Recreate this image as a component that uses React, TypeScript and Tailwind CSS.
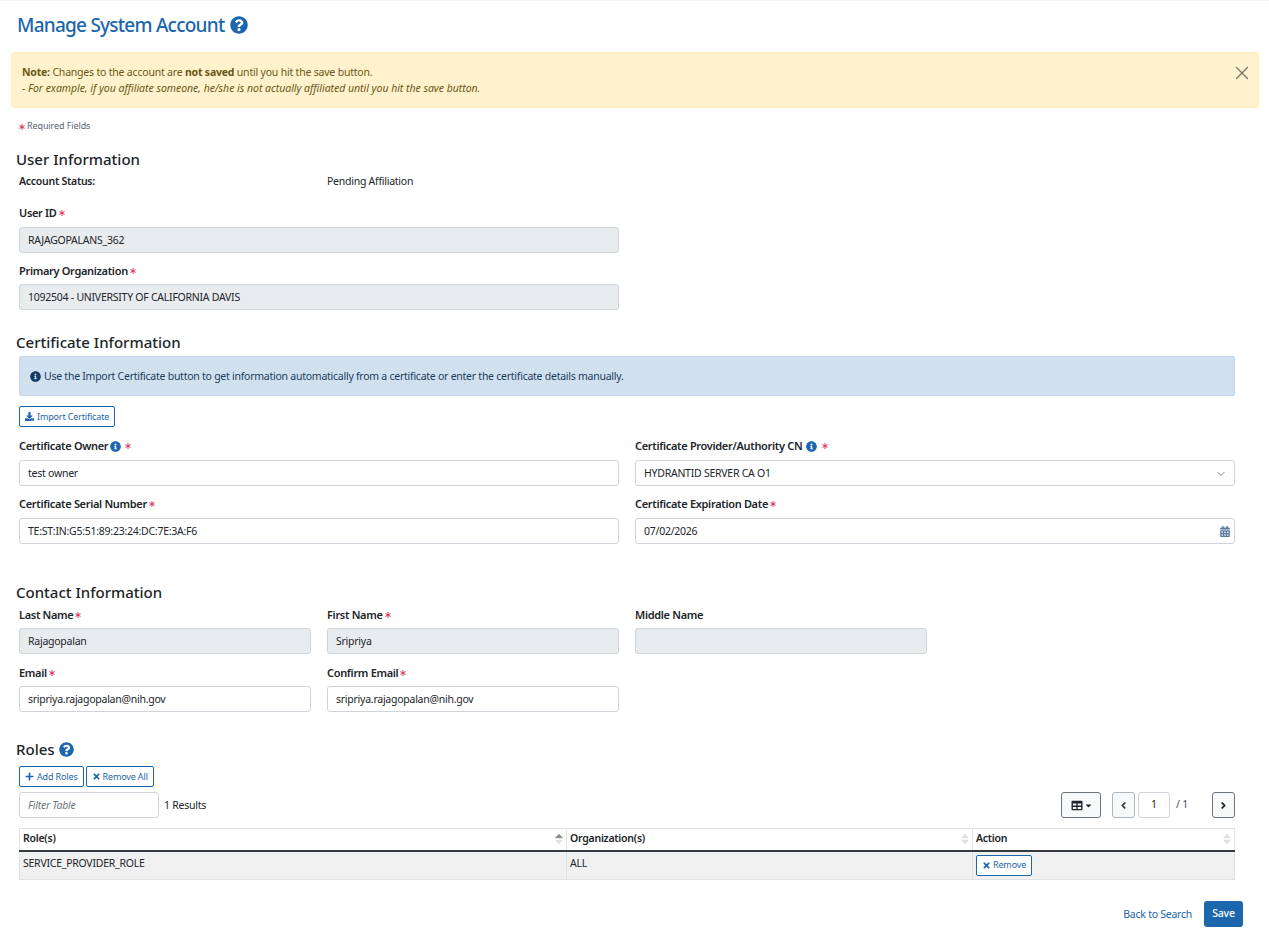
import React from 'react'
import {
  FaQuestionCircle,
  FaInfoCircle,
  FaDownload,
  FaPlus,
  FaTimes,
  FaTable,
  FaAsterisk,
  FaCalendarAlt,
  FaAngleLeft,
  FaAngleRight,
  FaCaretDown,
  FaSortUp,
  FaSortDown,
} from 'react-icons/fa'
import { LuChevronDown, LuX } from 'react-icons/lu'

function Req({ className = 'ml-[2px]' }: { className?: string }) {
  return <FaAsterisk className={`inline-block h-[6px] w-[6px] align-[-1px] text-[#dc3558] ${className}`} />
}

function Label({ children, className = 'pt-[1px]' }: { children: React.ReactNode; className?: string }) {
  return (
    <div className={`flex h-[17px] items-center text-[11px] font-semibold leading-[16px] tracking-[-0.32px] text-[#212529] ${className}`}>
      {children}
    </div>
  )
}

function Input({
  value,
  disabled,
  className = '',
  children,
}: {
  value: string
  disabled?: boolean
  className?: string
  children?: React.ReactNode
}) {
  return (
    <div
      className={`mt-[6px] flex h-[26px] items-center justify-between rounded-[3px] border border-[#ced4da] pl-[8px] pr-[4px] pt-[1px] text-[10.5px] text-[#212529] ${
        disabled ? 'bg-[#e9ecef]' : 'bg-white'
      } ${className}`}
    >
      {value}
      {children}
    </div>
  )
}

function OutlineButton({
  icon,
  label,
  className = 'gap-[3px]',
}: {
  icon: React.ReactNode
  label: string
  className?: string
}) {
  return (
    <button
      className={`flex h-[21px] items-center rounded-[2px] border border-[#1b66ac] bg-white px-[5px] text-[9px] tracking-[-0.15px] text-[#1b66ac] ${className}`}
    >
      {icon}
      {label}
    </button>
  )
}

function SortIcon({ active }: { active?: boolean }) {
  return (
    <span className="relative ml-auto h-[14px] w-[8px]">
      <FaSortUp className={`absolute left-0 top-0 h-[14px] w-[8px] ${active ? 'text-[#8a8f94]' : 'text-[#dee2e6]'}`} />
      <FaSortDown className="absolute left-0 top-0 h-[14px] w-[8px] text-[#dee2e6]" />
    </span>
  )
}

function Heading({ children }: { children: React.ReactNode }) {
  return <h2 className="pl-[16px] text-[15px] font-medium leading-[20px] tracking-normal text-[#212529]">{children}</h2>
}

export default function App() {
  return (
    <div className="h-[938px] overflow-hidden border-t border-[#f4f4f4] bg-white font-['Noto_Sans',sans-serif] tracking-[-0.25px] text-[#212529]">
      <h1 className="ml-[17px] mt-[11px] flex h-[26px] items-center gap-[6px] text-[19px] font-medium leading-[26px] tracking-[-0.76px] text-[#1b66ac]">
        Manage System Account
        <FaQuestionCircle className="h-[18px] w-[18px]" />
      </h1>

      <div className="ml-[11px] mr-[10px] mt-[14px] flex h-[56px] items-start justify-between rounded-[3px] border border-[#ffeeba] bg-[#fff2cd] pl-[10px] pr-[5px] pt-[11px] text-[10.5px] leading-[16px] text-[#6b5716]">
        <div>
          <div className="tracking-[-0.2px]">
            <b className="font-bold">Note:</b> Changes to the account are <b className="font-bold">not saved</b> until you hit the save button.
          </div>
          <div className="italic tracking-[-0.03px]">- For example, if you affiliate someone, he/she is not actually affiliated until you hit the save button.</div>
        </div>
        <LuX strokeWidth={1.5} className="mt-[-2px] h-[22px] w-[22px] text-[#7d7868]" />
      </div>

      <div className="ml-[19px] mt-[12px] flex h-[12px] items-center text-[9px] tracking-[-0.1px] text-[#5c6670]">
        <Req className="mr-[2px] mt-[2px]" />
        Required Fields
      </div>

      <div className="mt-[17px]">
        <Heading>User Information</Heading>
      </div>

      <div className="px-[19px]">
        <div className="mt-[4px] grid h-[17px] grid-cols-[292px_292px] items-center gap-x-[16px] text-[10.5px] leading-[17px]">
          <div className="font-semibold">Account Status:</div>
          <div>Pending Affiliation</div>
        </div>

        <div className="mt-[14px] w-[600px]">
          <Label>
            User ID <Req />
          </Label>
          <Input value="RAJAGOPALANS_362" disabled />
        </div>
        <div className="mt-[8px] w-[600px]">
          <Label className="pt-[2px]">
            Primary Organization <Req />
          </Label>
          <Input value="1092504 - UNIVERSITY OF CALIFORNIA DAVIS" disabled />
        </div>
      </div>

      <div className="mt-[22px]">
        <Heading>Certificate Information</Heading>
      </div>

      <div className="px-[19px]">
        <div className="mt-[4px] flex h-[40px] w-[1216px] items-center gap-[3px] rounded-[2px] border border-[#c3d6e8] bg-[#d1e0ef] pl-[10px] pt-[1px] text-[10.5px] text-[#1d3c5c]">
          <FaInfoCircle className="h-[11px] w-[11px] text-[#123a63]" />
          Use the Import Certificate button to get information automatically from a certificate or enter the certificate details manually.
        </div>

        <OutlineButton
          className="mt-[10px] gap-[3px]"
          icon={<FaDownload className="h-[9px] w-[9px]" />}
          label="Import Certificate"
        />

        <div className="mt-[10px] grid w-[1216px] grid-cols-2 gap-x-[16px] gap-y-[9px]">
          <div>
            <Label>
              Certificate Owner
              <FaInfoCircle className="ml-[2px] h-[11px] w-[11px] text-[#1b66ac]" />
              <Req className="ml-[4px]" />
            </Label>
            <Input value="test owner" />
          </div>
          <div>
            <Label>
              Certificate Provider/Authority CN
              <FaInfoCircle className="ml-[4px] h-[11px] w-[11px] text-[#1b66ac]" />
              <Req className="ml-[5px]" />
            </Label>
            <Input value="HYDRANTID SERVER CA O1">
              <LuChevronDown strokeWidth={1.5} className="mr-[3px] h-[12px] w-[12px] text-[#495057]" />
            </Input>
          </div>
          <div>
            <Label>
              Certificate Serial Number <Req />
            </Label>
            <Input value="TE:ST:IN:G5:51:89:23:24:DC:7E:3A:F6" />
          </div>
          <div>
            <Label>
              Certificate Expiration Date <Req />
            </Label>
            <Input value="07/02/2026">
              <FaCalendarAlt className="h-[11px] w-[10px] text-[#56779f]" />
            </Input>
          </div>
        </div>
      </div>

      <div className="mt-[38px]">
        <Heading>Contact Information</Heading>
      </div>

      <div className="px-[19px]">
        <div className="mt-[3px] grid w-[1216px] grid-cols-4 gap-x-[16px] gap-y-[9px]">
          <div>
            <Label className="pt-[2px]">
              Last Name <Req />
            </Label>
            <Input value="Rajagopalan" disabled />
          </div>
          <div>
            <Label className="pt-[2px]">
              First Name <Req />
            </Label>
            <Input value="Sripriya" disabled />
          </div>
          <div>
            <Label className="pt-[2px]">Middle Name</Label>
            <Input value="" disabled />
          </div>
          <div />
          <div>
            <Label className="pt-[2px]">
              Email <Req />
            </Label>
            <Input value="sripriya.rajagopalan@nih.gov" />
          </div>
          <div>
            <Label className="pt-[2px]">
              Confirm Email <Req />
            </Label>
            <Input value="sripriya.rajagopalan@nih.gov" />
          </div>
        </div>
      </div>

      <div className="mt-[27px] flex items-center gap-[4px]">
        <Heading>Roles</Heading>
        <FaQuestionCircle className="h-[15px] w-[15px] text-[#1b66ac]" />
      </div>

      <div className="px-[19px]">
        <div className="mt-[7px] flex gap-[2px]">
          <OutlineButton icon={<FaPlus className="h-[9px] w-[9px]" />} label="Add Roles" />
          <OutlineButton className="gap-[2px]" icon={<FaTimes className="h-[9px] w-[9px]" />} label="Remove All" />
        </div>

        <div className="mt-[5px] flex h-[26px] w-[1216px] items-center">
          <div className="flex h-[26px] w-[140px] items-center rounded-[3px] border border-[#ced4da] px-[8px] pt-[1px] text-[10.5px] italic text-[#6c757d]">
            Filter Table
          </div>
          <span className="ml-[5px] pt-[1px] text-[10.5px]">1 Results</span>
          <button className="ml-auto flex h-[26px] w-[40px] items-center justify-center gap-[2px] rounded-[3px] border border-[#6c757d] bg-[#f8f9fa]">
            <FaTable className="h-[11px] w-[12px] text-[#212529]" />
            <FaCaretDown className="h-[9px] w-[7px] text-[#212529]" />
          </button>
          <button className="ml-[11px] flex h-[26px] w-[23px] items-center justify-center rounded-[3px] border border-[#adb5bd] bg-[#f8f9fa]">
            <FaAngleLeft className="h-[11px] w-[11px] text-[#343a40]" />
          </button>
          <div className="ml-[3px] flex h-[26px] w-[32px] items-center justify-center rounded-[3px] border border-[#ced4da] text-[10.5px]">1</div>
          <span className="ml-[6px] w-[36px] text-[10.5px] text-[#495057]">/ 1</span>
          <button className="flex h-[26px] w-[23px] items-center justify-center rounded-[3px] border border-[#6c757d] bg-[#f8f9fa]">
            <FaAngleRight className="h-[11px] w-[11px] text-[#212529]" />
          </button>
        </div>

        <table className="mt-[10px] w-[1216px] table-fixed border-collapse text-[10.5px]">
          <thead>
            <tr className="h-[22px] border border-b-2 border-[#dee2e6] border-b-[#343a40] bg-white text-left">
              <th className="w-[547px] border-r border-[#dee2e6] px-[3px] font-semibold">
                <div className="flex items-center">Role(s)<SortIcon active /></div>
              </th>
              <th className="w-[406px] border-r border-[#dee2e6] px-[3px] font-semibold">
                <div className="flex items-center">Organization(s)<SortIcon /></div>
              </th>
              <th className="px-[3px] font-semibold">
                <div className="flex items-center">Action<SortIcon /></div>
              </th>
            </tr>
          </thead>
          <tbody>
            <tr className="h-[29px] border border-[#dee2e6] bg-[#f0f0f0] align-top">
              <td className="border-r border-[#dee2e6] px-[3px] pt-[4px]">SERVICE_PROVIDER_ROLE</td>
              <td className="border-r border-[#dee2e6] px-[3px] pt-[4px]">ALL</td>
              <td className="px-[3px] pt-[3px]">
                <OutlineButton className="gap-[2px]" icon={<FaTimes className="h-[9px] w-[9px]" />} label="Remove" />
              </td>
            </tr>
          </tbody>
        </table>
      </div>

      <div className="mt-[21px] flex items-center justify-end pr-[26px]">
        <a className="pt-[1px] text-[10.5px] text-[#1b66ac]">Back to Search</a>
        <button className="ml-[12px] h-[26px] w-[39px] rounded-[3px] bg-[#1b66ac] text-[10.5px] font-medium text-white">Save</button>
      </div>
    </div>
  )
}
